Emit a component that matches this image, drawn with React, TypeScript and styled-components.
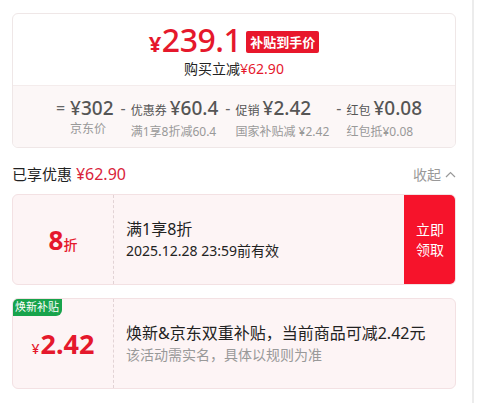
import React from 'react'
import styled, { createGlobalStyle } from 'styled-components'

const GlobalStyle = createGlobalStyle`
  body {
    margin: 0;
    background: #fff;
    font-family: "Noto Sans", "Noto Sans CJK SC", sans-serif;
    color: #222;
  }
`

const Panel = styled.div`
  width: 474px;
  min-height: 403px;
  box-sizing: border-box;
  border-right: 2px solid #ececec;
  padding: 13px 16px 0 12px;
  display: flex;
  flex-direction: column;
`

const PriceCard = styled.div`
  border: 1px solid #efe7e7;
  border-radius: 6px;
  overflow: hidden;
`

const PriceTop = styled.div`
  height: 71px;
  display: flex;
  flex-direction: column;
  align-items: center;
  padding-top: 8px;
  box-sizing: border-box;
`

const PriceRow = styled.div`
  display: flex;
  align-items: center;
  gap: 5px;
  height: 38px;
`

const BigPrice = styled.span`
  color: #e5182c;
  font-size: 32px;
  font-weight: 500;
  line-height: 38px;
  letter-spacing: -0.5px;
  small {
    font-size: 22px;
    font-weight: 700;
    margin-right: 1px;
  }
`

const SubsidyTag = styled.span`
  background: #e8172b;
  color: #fff;
  font-size: 13px;
  font-weight: 700;
  line-height: 22px;
  padding: 0 4px;
  border-radius: 2px;
  margin-top: 2px;
`

const Reduce = styled.div`
  font-size: 14px;
  line-height: 18px;
  color: #222;
  em {
    font-style: normal;
    color: #e5182c;
  }
`

const Breakdown = styled.div`
  background: #fcf7f7;
  border-top: 1px solid #f4ecec;
  height: 62px;
  display: flex;
  justify-content: center;
  gap: 7px;
  padding: 10px 0 0 10px;
  box-sizing: border-box;
`

const Term = styled.div`
  display: flex;
  gap: 5px;
`

const Op = styled.span`
  font-size: 16px;
  color: #666;
  line-height: 24px;
`

const TermBody = styled.div`
  display: flex;
  flex-direction: column;
`

const TermMain = styled.div`
  display: flex;
  align-items: baseline;
  gap: 3px;
  line-height: 24px;
  white-space: nowrap;
`

const TermLabel = styled.span`
  font-size: 12px;
  color: #555;
`

const TermValue = styled.span`
  font-size: 19px;
  font-weight: 500;
  color: #555;
`

const TermDesc = styled.div`
  font-size: 12px;
  color: #999;
  line-height: 18px;
  white-space: nowrap;
`

const SavedRow = styled.div`
  display: flex;
  justify-content: space-between;
  align-items: center;
  margin-top: 15px;
  height: 22px;
`

const Saved = styled.div`
  font-size: 15px;
  color: #222;
  em {
    font-style: normal;
    color: #d9233a;
    font-size: 16px;
  }
`

const Fold = styled.div`
  font-size: 14px;
  color: #999;
  display: flex;
  align-items: center;
  gap: 4px;
`

const Coupon = styled.div<{ $top: number }>`
  position: relative;
  margin-top: ${p => p.$top}px;
  height: 91px;
  border: 1px solid #f3e1e3;
  border-radius: 6px;
  background: #fdf4f5;
  display: flex;
  box-sizing: border-box;
  overflow: hidden;
`

const CouponLeft = styled.div`
  width: 100px;
  flex-shrink: 0;
  border-right: 1px dashed #e2d3d5;
  display: flex;
  align-items: center;
  justify-content: center;
  color: #e5182c;
`

const Discount = styled.span`
  font-size: 26px;
  font-weight: 700;
  small {
    font-size: 14px;
    font-weight: 500;
  }
`

const Amount = styled.span`
  font-size: 27px;
  font-weight: 700;
  small {
    font-size: 14px;
    font-weight: 500;
    margin-right: 1px;
  }
`

const CouponInfo = styled.div`
  flex: 1;
  padding-left: 12px;
  display: flex;
  flex-direction: column;
  justify-content: center;
`

const CouponTitle = styled.div`
  font-size: 16px;
  line-height: 22px;
  color: #222;
`

const CouponNote = styled.div<{ $muted?: boolean }>`
  font-size: 14px;
  line-height: 22px;
  color: ${p => (p.$muted ? '#999' : '#222')};
`

const TakeButton = styled.button`
  width: 52px;
  margin: -1px -1px -1px 0;
  border: none;
  border-radius: 0 6px 6px 0;
  background: #f6132b;
  color: #fff;
  font-family: inherit;
  font-size: 14px;
  line-height: 20px;
  padding: 0 6px;
`

const Badge = styled.span`
  position: absolute;
  left: -1px;
  top: -1px;
  background: #18a34c;
  color: #fff;
  font-size: 11px;
  line-height: 18px;
  padding: 0 3px;
  border-radius: 6px 0 6px 0;
`

const terms = [
  { op: '=', label: '', value: '¥302', desc: '京东价' },
  { op: '-', label: '优惠券', value: '¥60.4', desc: '满1享8折减60.4' },
  { op: '-', label: '促销', value: '¥2.42', desc: '国家补贴减 ¥2.42' },
  { op: '-', label: '红包', value: '¥0.08', desc: '红包抵¥0.08' },
]

export default function App() {
  return (
    <>
      <GlobalStyle />
      <Panel>
        <PriceCard>
          <PriceTop>
            <PriceRow>
              <BigPrice><small>¥</small>239.1</BigPrice>
              <SubsidyTag>补贴到手价</SubsidyTag>
            </PriceRow>
            <Reduce>购买立减<em>¥62.90</em></Reduce>
          </PriceTop>
          <Breakdown>
            {terms.map(t => (
              <Term key={t.desc}>
                <Op>{t.op}</Op>
                <TermBody>
                  <TermMain>
                    {t.label && <TermLabel>{t.label}</TermLabel>}
                    <TermValue>{t.value}</TermValue>
                  </TermMain>
                  <TermDesc>{t.desc}</TermDesc>
                </TermBody>
              </Term>
            ))}
          </Breakdown>
        </PriceCard>

        <SavedRow>
          <Saved>已享优惠 <em>¥62.90</em></Saved>
          <Fold>
            收起
            <svg width="11" height="7" viewBox="0 0 11 7" fill="none">
              <path d="M1 6l4.5-4.5L10 6" stroke="#999" strokeWidth="1.2" />
            </svg>
          </Fold>
        </SavedRow>

        <Coupon $top={9}>
          <CouponLeft>
            <Discount>8<small>折</small></Discount>
          </CouponLeft>
          <CouponInfo>
            <CouponTitle>满1享8折</CouponTitle>
            <CouponNote>2025.12.28 23:59前有效</CouponNote>
          </CouponInfo>
          <TakeButton>立即 领取</TakeButton>
        </Coupon>

        <Coupon $top={13}>
          <Badge>焕新补贴</Badge>
          <CouponLeft>
            <Amount><small>¥</small>2.42</Amount>
          </CouponLeft>
          <CouponInfo>
            <CouponTitle>焕新&amp;京东双重补贴，当前商品可减2.42元</CouponTitle>
            <CouponNote $muted>该活动需实名，具体以规则为准</CouponNote>
          </CouponInfo>
        </Coupon>
      </Panel>
    </>
  )
}
